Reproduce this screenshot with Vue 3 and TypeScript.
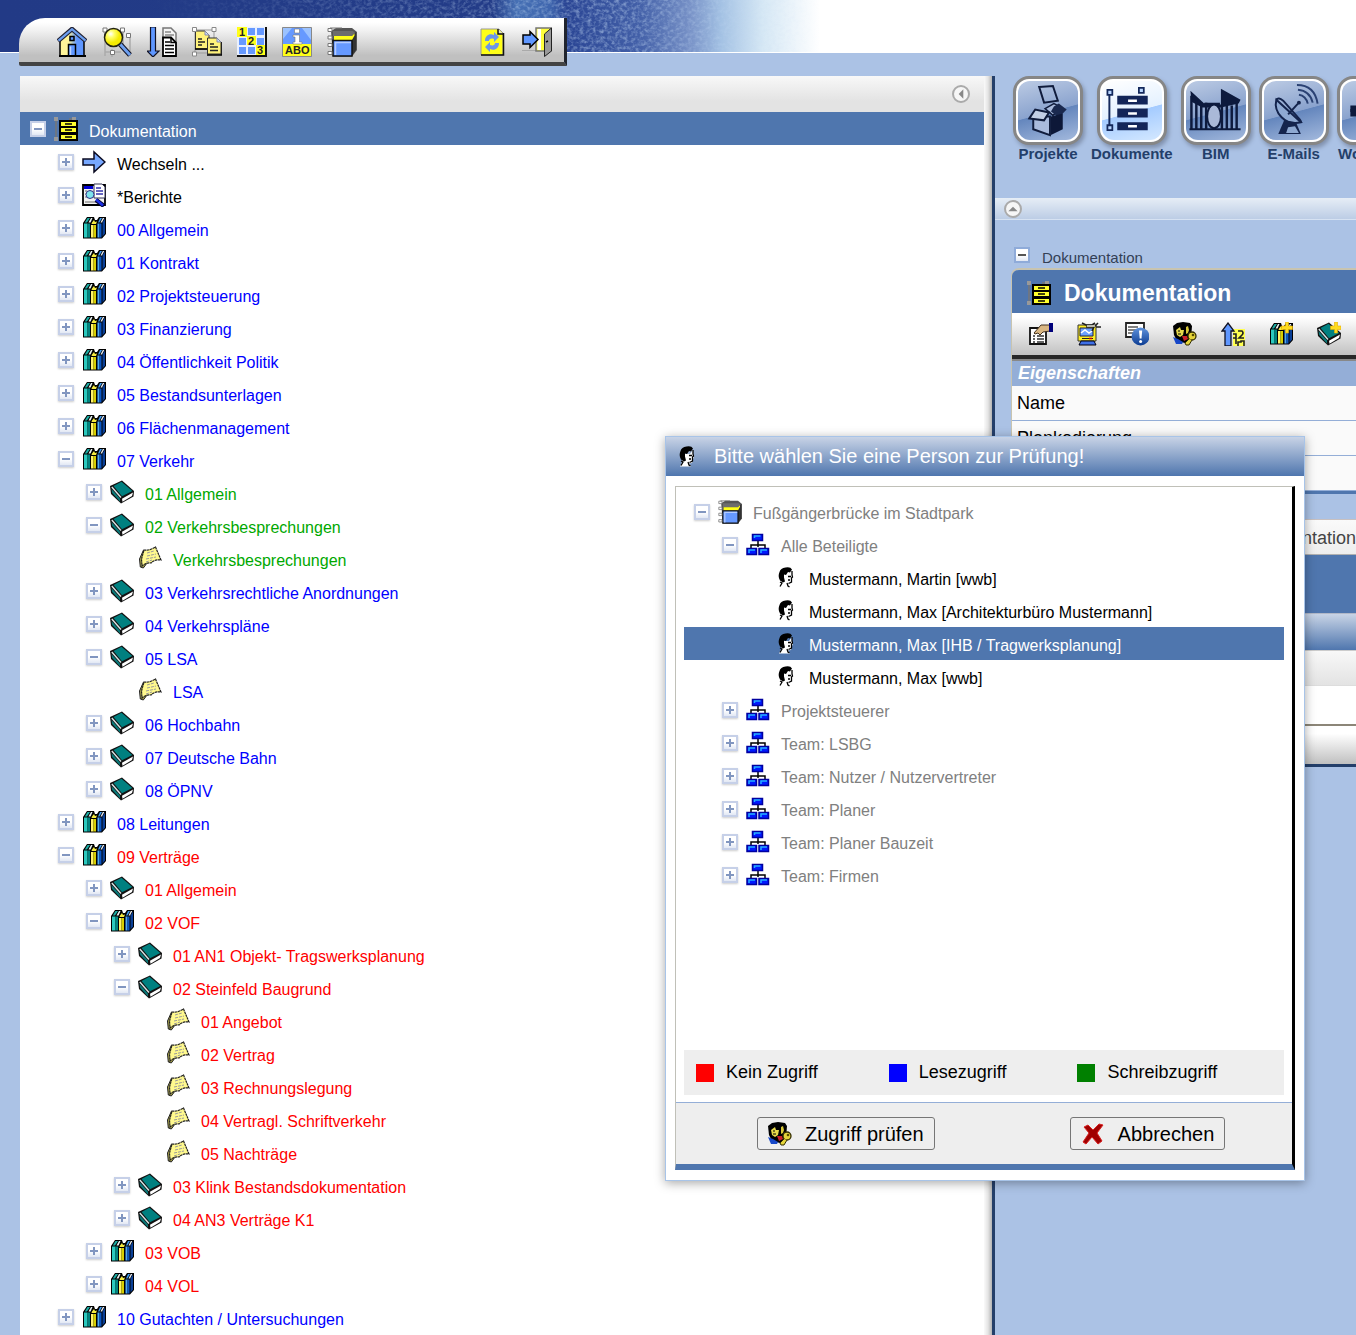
<script setup lang="ts">
import { ref } from 'vue'

type Toggle = 'open' | 'closed' | 'none'
type Access = 'neutral' | 'denied' | 'read' | 'write' | 'group'

interface TreeNode {
  label: string
  level: number
  toggle: Toggle
  icon: string
  access: Access
}

interface Caption {
  x: number
  y: number
  text: string
}

const node = (level: number, toggle: Toggle, icon: string, access: Access, label: string): TreeNode => ({
  label,
  level,
  toggle,
  icon,
  access,
})

const documents: TreeNode[] = [
  node(0, 'open', 'cabinet', 'neutral', 'Dokumentation'),
  node(1, 'closed', 'arrow', 'neutral', 'Wechseln ...'),
  node(1, 'closed', 'report', 'neutral', '*Berichte'),
  node(1, 'closed', 'books', 'read', '00 Allgemein'),
  node(1, 'closed', 'books', 'read', '01 Kontrakt'),
  node(1, 'closed', 'books', 'read', '02 Projektsteuerung'),
  node(1, 'closed', 'books', 'read', '03 Finanzierung'),
  node(1, 'closed', 'books', 'read', '04 Öffentlichkeit Politik'),
  node(1, 'closed', 'books', 'read', '05 Bestandsunterlagen'),
  node(1, 'closed', 'books', 'read', '06 Flächenmanagement'),
  node(1, 'open', 'books', 'read', '07 Verkehr'),
  node(2, 'closed', 'book', 'write', '01 Allgemein'),
  node(2, 'open', 'book', 'write', '02 Verkehrsbesprechungen'),
  node(3, 'none', 'note', 'write', 'Verkehrsbesprechungen'),
  node(2, 'closed', 'book', 'read', '03 Verkehrsrechtliche Anordnungen'),
  node(2, 'closed', 'book', 'read', '04 Verkehrspläne'),
  node(2, 'open', 'book', 'read', '05 LSA'),
  node(3, 'none', 'note', 'read', 'LSA'),
  node(2, 'closed', 'book', 'read', '06 Hochbahn'),
  node(2, 'closed', 'book', 'read', '07 Deutsche Bahn'),
  node(2, 'closed', 'book', 'read', '08 ÖPNV'),
  node(1, 'closed', 'books', 'read', '08 Leitungen'),
  node(1, 'open', 'books', 'denied', '09 Verträge'),
  node(2, 'closed', 'book', 'denied', '01 Allgemein'),
  node(2, 'open', 'books', 'denied', '02 VOF'),
  node(3, 'closed', 'book', 'denied', '01 AN1 Objekt- Tragswerksplanung'),
  node(3, 'open', 'book', 'denied', '02 Steinfeld Baugrund'),
  node(4, 'none', 'note', 'denied', '01 Angebot'),
  node(4, 'none', 'note', 'denied', '02 Vertrag'),
  node(4, 'none', 'note', 'denied', '03 Rechnungslegung'),
  node(4, 'none', 'note', 'denied', '04 Vertragl. Schriftverkehr'),
  node(4, 'none', 'note', 'denied', '05 Nachträge'),
  node(3, 'closed', 'book', 'denied', '03 Klink Bestandsdokumentation'),
  node(3, 'closed', 'book', 'denied', '04 AN3 Verträge K1'),
  node(2, 'closed', 'books', 'denied', '03 VOB'),
  node(2, 'closed', 'books', 'denied', '04 VOL'),
  node(1, 'closed', 'books', 'read', '10 Gutachten / Untersuchungen'),
]

const people: TreeNode[] = [
  node(0, 'open', 'binder', 'group', 'Fußgängerbrücke im Stadtpark'),
  node(1, 'open', 'org', 'group', 'Alle Beteiligte'),
  node(2, 'none', 'person', 'neutral', 'Mustermann, Martin [wwb]'),
  node(2, 'none', 'person', 'neutral', 'Mustermann, Max [Architekturbüro Mustermann]'),
  node(2, 'none', 'person', 'neutral', 'Mustermann, Max [IHB / Tragwerksplanung]'),
  node(2, 'none', 'person', 'neutral', 'Mustermann, Max [wwb]'),
  node(1, 'closed', 'org', 'group', 'Projektsteuerer'),
  node(1, 'closed', 'org', 'group', 'Team: LSBG'),
  node(1, 'closed', 'org', 'group', 'Team: Nutzer / Nutzervertreter'),
  node(1, 'closed', 'org', 'group', 'Team: Planer'),
  node(1, 'closed', 'org', 'group', 'Team: Planer Bauzeit'),
  node(1, 'closed', 'org', 'group', 'Team: Firmen'),
]

const trees = { documents, people }
const selected = ref({ documents: 0, people: 4 })

const mainTools = ['home', 'search', 'sortdocs', 'copy', 'numbers', 'abo', 'binder']
const sessionTools = ['refresh', 'exit']
const cardTools = ['props', 'screen', 'info', 'users', 'order', 'booksnew', 'booknew']

// Lettering that sits on top of an icon
const captions: Record<string, Caption[]> = {
  numbers: [
    { x: 2, y: 9, text: '1' },
    { x: 11, y: 18, text: '2' },
    { x: 20, y: 27, text: '3' },
  ],
  abo: [{ x: 3, y: 27, text: 'ABO' }],
}

const modules = [
  { icon: 'nav-projects', label: 'Projekte', active: false },
  { icon: 'nav-documents', label: 'Dokumente', active: true },
  { icon: 'nav-bim', label: 'BIM', active: false },
  { icon: 'nav-mail', label: 'E-Mails', active: false },
  { icon: 'nav-flow', label: 'Workflow', active: false },
]
const legend = [
  { kind: 'denied', label: 'Kein Zugriff' },
  { kind: 'read', label: 'Lesezugriff' },
  { kind: 'write', label: 'Schreibzugriff' },
]
</script>

<template>
  <svg class="sprite" aria-hidden="true">
    <defs>
      <linearGradient id="g-house"><stop offset=".35" stop-color="#fff59a" /><stop offset=".7" stop-color="#5f97ff" /></linearGradient>
      <radialGradient id="g-lens" cx=".35" cy=".3"><stop offset="0" stop-color="#fff" /><stop offset=".4" stop-color="#ffff6a" /><stop offset="1" stop-color="#f4ea00" /></radialGradient>
      <linearGradient id="g-info" x2="0" y2="1"><stop offset="0" stop-color="#5f93dd" /><stop offset="1" stop-color="#0c3c92" /></linearGradient>
    </defs>
    <symbol id="home" viewBox="0 0 30 30">
      <path d="M3 13 15 3l12 10v16H3z" fill="url(#g-house)" stroke="#000" stroke-width="1.5" />
      <path d="M1 14 15 2l14 12" fill="none" stroke="#223" stroke-width="4.500" />
      <path d="M1.500 13.700 15 2.200l13.500 11.500" fill="none" stroke="#6c9ff0" stroke-width="2.300" />
      <path d="M13 9.500h4v4h-4z" fill="#5f97ff" stroke="#000" stroke-width="1.500" />
      <path d="M11.500 29V17.500h7V29" fill="#5f97ff" stroke="#000" stroke-width="1.500" />
      <path d="M13.500 28V19.500" stroke="#bcd3ff" stroke-width="1.500" />
      <path d="M2 29h27" stroke="#000" stroke-width="2" />
    </symbol>
    <symbol id="search" viewBox="0 0 30 30">
      <path d="M3 3v26M21 3v20M28 9v20M3 25h16M10 22v8" stroke="#aaa" stroke-width="1.500" fill="none" />
      <path d="M1 1h4v4H1zM18.500 1h4v4h-4zM24.500 6.500h4v4h-4zM8.500 23.500h4v4h-4z" fill="#fff" stroke="#777" />
      <path d="m18 17 10 11" stroke="#112" stroke-width="5" /><path d="m18 17 10 11" stroke="#6c9ff0" stroke-width="3" />
      <circle cx="11.500" cy="10.500" r="9" fill="url(#g-lens)" stroke="#221" stroke-width="1.500" />
    </symbol>
    <symbol id="sortdocs" viewBox="0 0 30 30">
      <path d="M3.500 0h5v24H12l-6 6-6-6h3.500z" fill="#5f97ff" stroke="#112" stroke-width="1.200" />
      <path d="M16 1h8l5 5v9H16z" fill="#f4f4f4" stroke="#777" stroke-width="1.500" />
      <path d="M18 5h6M18 8h9" stroke="#888" stroke-width="1.500" />
      <path d="M16 10.500h8l5 5V29H16z" fill="#fff" stroke="#000" stroke-width="1.800" />
      <path d="M24 10v5.500h5M18 15h5M18 18.500h9M18 22h9M18 25.500h9" fill="none" stroke="#000" stroke-width="1.500" />
    </symbol>
    <symbol id="copy" viewBox="0 0 30 30">
      <path d="M3 3h19v23H3z" fill="none" stroke="#999" />
      <path d="M3.500 4H13l4 4v14H3.500z" fill="#fff27a" stroke="#333" />
      <path d="M15.500 11H25l4 4v12H15.500z" fill="#fff27a" stroke="#333" />
      <path d="M3 22h12M15 28h15V15" stroke="#000" stroke-width="1.500" fill="none" />
      <path d="M6 12h4M6 15h7M6 18h4M18 17h4M18 20h8M18 23.500h8" stroke="#222" stroke-width="1.500" />
      <path d="M13 4v4h4M25 11v4h4" fill="#cfe0ff" stroke="#88a" />
      <path d="M.5 .5h4v4h-4zM20 .5h4v4h-4zM.5 25h4v4h-4z" fill="#fff" stroke="#888" />
    </symbol>
    <symbol id="numbers" viewBox="0 0 30 30">
      <path d="M0 0h30v30H0z" fill="#e9f0ff" /><path d="M0 29h29V0" fill="none" stroke="#111" stroke-width="2" />
      <path d="M11 1h7v7h-7zM20 1h7v7h-7zM2 11h7v7H2zM20 11h7v7h-7zM2 20h7v7H2zM11 20h7v7h-7z" fill="#6699ff" />
      <path d="M0 0h10v10H0zM10 9h9v9h-9zM19 18h9v10h-9z" fill="#ffff19" />
    </symbol>
    <symbol id="abo" viewBox="0 0 30 30">
      <path d="M.5 .5h29v29H.5z" fill="#6699ff" stroke="#888" />
      <path d="M1 1h9L1 12zM20 1h9v12z" fill="#9bc2ff" />
      <path d="M1 17h28v12H1z" fill="#ffff19" />
      <path d="M12.500 2h5v4h-5zM11 8h6.500v7H20v2h-9v-2h2v-5h-2z" fill="#fff" stroke="#777" stroke-width=".6" />
    </symbol>
    <symbol id="binder" viewBox="0 0 30 30">
      <path d="M4 4 9 1h16l5 4v18l-5 6.500H6z" fill="#555" />
      <path d="M25 9l4-4v18l-4 6z" fill="#333" />
      <path d="M6 4h20l2 2-3 3H6z" fill="#6d6d6d" />
      <path d="M7 9h18l2.500-2.500v2L25 13H7z" fill="#ffff19" />
      <path d="M6 13.500h19V29H6z" fill="#6699ff" stroke="#111" stroke-width="1.500" />
      <path d="M8.500 28V15.500H24" stroke="#b4ccff" stroke-width="1.500" fill="none" />
      <path d="M1 1.500h4v3H1zM1 9h4v3H1zM1 16.500h4v3H1zM1 24.500h4v3H1z" fill="#fff" stroke="#777" />
      <path d="M3 1h12" stroke="#777" />
    </symbol>
    <symbol id="refresh" viewBox="0 0 30 30">
      <path d="M4 2h18l4 4v22H4z" fill="#ffff19" stroke="#999" />
      <path d="M4 28h22.500V6" fill="none" stroke="#111" stroke-width="1.500" /><path d="M21 2v5h5" fill="#ddd" stroke="#111" stroke-width="1.500" />
      <path d="M8 14c0-6 5-8 9-6V5l5 5-5 5v-3c-3-1-5 0-5 2zM22 16c0 6-5 8-9 6v3l-5-5 5-5v3c3 1 5 0 5-2z" fill="#6c96e8" />
    </symbol>
    <symbol id="exit" viewBox="0 0 30 30">
      <path d="M0 23.500h14" stroke="#aaa" />
      <path d="M14 1h15v23H14z" fill="#ffff3c" stroke="#777" stroke-width="1.500" /><path d="M15.500 2H19v21h-3.500z" fill="#fff" />
      <path d="M22.500 7 29.500 1v23l-7 5.500z" fill="#999" stroke="#222" /><path d="M24 15l2-1" stroke="#000" stroke-width="1.500" />
      <path d="M1 8h7V4.500l8 8-8 8V17H1z" fill="#5f97ff" stroke="#000" stroke-width="1.500" />
    </symbol>

    <symbol id="cabinet" viewBox="0 0 24 24">
      <path d="M2 2v20M15 2h7" stroke="#777" stroke-width="1.500" /><path d="M0 0h4v4H0zM0 20h4v4H0zM18 0h4v3h-4z" fill="#999" />
      <path d="M5 3h19v21H5z" fill="#000" />
      <path d="M7 5h15v4H7zM7 11h15v4H7zM7 18h15v4H7z" fill="#ffff2e" />
      <path d="M11 7h7M11 13h7M11 20h7" stroke="#000" stroke-width="1.500" />
    </symbol>
    <symbol id="arrow" viewBox="0 0 24 24"><path d="M1 9h11V2l11 10-11 10v-7H1z" fill="#77a8ff" stroke="#0a0a20" stroke-width="1.500" /></symbol>
    <symbol id="report" viewBox="0 0 24 24">
      <path d="M1 2h22v20H1z" fill="#f2f2f2" stroke="#000" stroke-width="1.800" /><path d="M2 3h9v3H2z" fill="#0000d8" />
      <path d="M3 8h2M3 11h2M3 14h2M3 19h11" stroke="#999" stroke-width="1.500" />
      <path d="M12 1h8l3 3v11H12z" fill="#fff" stroke="#335" /><path d="M14 5h5M14 8h7M14 11h7" stroke="#33a" stroke-width="1.500" />
      <circle cx="8" cy="11.500" r="4" fill="#7ee4ec" stroke="#338" /><path d="m14 17 8 6" stroke="#000030" stroke-width="4.500" /><path d="m14 16.500 7 6" stroke="#1b30e8" stroke-width="2.500" />
    </symbol>
    <symbol id="books" viewBox="0 0 24 24">
      <path d="M1 7 5 1h7l1 3h2l2-3h7v17l-4 4.500H1z" fill="#000" />
      <path d="M2 7.500h3.500v14H2z" fill="#2cc9be" /><path d="M5.500 7.500h2.500v14H5.500z" fill="#008580" />
      <path d="M5.500 2H8L5 6.500H2.800z" fill="#1cada5" /><path d="M9 2h1.500L8.500 6.500H6.500z" fill="#e8f4f2" />
      <path d="M9 9h2.500v12.500H9z" fill="#fff36b" /><path d="M11.500 9H14v12.500h-2.500z" fill="#d8cf00" /><path d="M10 6.500 12 4l1 2 2-.5-1 2.500H9.500z" fill="#f4ea40" />
      <path d="M15.500 7.500h2v14h-2z" fill="#4ba6f6" /><path d="M17.500 7.500h2v14h-2z" fill="#0b56c4" /><path d="m20.500 6.500 2.500-4v15l-2.500 3z" fill="#0a3f96" />
      <path d="M18 2h2l-2.500 4.500H16z" fill="#3f9cf2" /><path d="M20.800 2h1.500L20 6.500h-1.500z" fill="#e8eef8" />
    </symbol>
    <symbol id="book" viewBox="0 0 24 24">
      <path d="M12 0.500 24 11l-.5 5.500L11 23.500 1 14 0 6z" fill="#111" />
      <path d="M11.500 1.800 22.300 11 12 16.300 3.500 6z" fill="#008080" /><path d="M1.500 9 10 18.500v3L2.200 13z" fill="#0a7a7a" /><path d="M1.800 7 11 17.500" stroke="#d8e6e6" stroke-width="1.400" />
      <path d="m12 18.700 11-6.200-1 3.500-9.500 5.700z" fill="#fff" />
    </symbol>
    <symbol id="note" viewBox="0 0 24 24">
      <path d="M5.500 4 1.500 13l.8 8 3 1 3-4z" fill="#a5a04a" stroke="#222" />
      <path d="M6 4q5 1 11.500-3L23 14q-6-1-10 3-4-1-9 3l-.5-7z" fill="#fff98e" stroke="#222" stroke-width="1.200" stroke-dasharray="2.500 .5" />
      <path d="m9 7 7-2M9 10l9-2M8 13l10-2M8 16l6-2" stroke="#999" stroke-dasharray="3 1" />
    </symbol>
    <symbol id="org" viewBox="0 0 24 24">
      <path d="M12 7v7M5 15v-3h14v3" fill="none" stroke="#000" stroke-width="1.500" />
      <path d="M6.500 1.500h10v6h-10zM1 15.500h9.500v6H1zM13 15.500h9.500v6H13z" fill="#0019ff" stroke="#0000a0" stroke-width="1.500" />
      <path d="M8.500 5V3h6M3 20v-3h6M15 20v-3h6" stroke="#26b0ff" stroke-width="1.500" fill="none" />
    </symbol>
    <symbol id="person" viewBox="0 0 24 24">
      <path d="M9 9h6l3-4v6l1 1-1 2-1 4-3 .5 2 3H5l2-4z" fill="#fff" />
      <path d="M5.500 6q1-4 6-4.500 5-1 6.500 2l-2 3-2-.5-2 3-2-.5v3l1 4-2 1-3-2q-2.500-4-.5-8.500z" fill="#000" />
      <path d="M18 5v4l.5 2-1 1v4l-3 1.500M6 16l2 1-2 3.500M13 17l1 3 1.500 1M14 10.500h3M14 14h2" stroke="#000" stroke-width="1.300" fill="none" />
    </symbol>
    <symbol id="props" viewBox="0 0 24 24">
      <path d="M1 6h16v16H1z" fill="#fff" stroke="#111" stroke-width="1.800" /><path d="M4 14h2M8 14h7M4 17h2M8 17h7M4 20h2M8 20h7" stroke="#333" stroke-width="1.300" />
      <path d="M5 11 12 3h9v6l-7 1-3 3-2-2-3 1z" fill="#d9b682" stroke="#432" /><path d="M20 1h4v9h-4z" fill="#00007a" />
    </symbol>
    <symbol id="screen" viewBox="0 0 24 24">
      <path d="M1 3h18v16H1z" fill="#ffee20" stroke="#333" /><path d="M3 6h13v8H3z" fill="#6aa0ff" stroke="#224" /><path d="M4 11l4-3 4 3 3-2" stroke="#fff" fill="none" stroke-width="1.500" />
      <path d="M5 1l4 2h6l3-2M9 5h8l4-4M17 5l-2 4M19 5h5" fill="none" stroke="#222" stroke-width="1.600" /><path d="M10 4h8" stroke="#ddd" stroke-width="1.500" />
      <path d="M4 19h13l2 4H2z" fill="#3f70e8" stroke="#001" /><path d="M5 16.500h11" stroke="#222" /><path d="M12 16.500h3" stroke="#c00" stroke-width="1.500" />
    </symbol>
    <symbol id="info" viewBox="0 0 24 24">
      <path d="M1 1h18v14H1z" fill="#fff" stroke="#222" stroke-width="1.800" /><path d="M3 5h10M3 8h8M3 11h7" stroke="#555" stroke-width="1.300" />
      <circle cx="15.500" cy="14.500" r="9" fill="url(#g-info)" /><path d="M14 8.500h3.200l-.7 8h-1.800z" fill="#fff" /><circle cx="15.600" cy="19.500" r="1.500" fill="#fff" />
    </symbol>
    <symbol id="users" viewBox="0 0 24 24">
      <path d="M0 4 4 1l6-1 7 1 2 3-1 12-6 5-8-2-3-6z" fill="#000" />
      <path d="M3 8l4-3 1 3h3l-1 5-3 2-3-2z" fill="#e6d94a" /><path d="M13 5l2-1 1 4-1 3-2 1z" fill="#d8c838" /><path d="M6 8v2M8 12H5" stroke="#000" />
      <path d="M0 15l5 2 5 3-1 2H3z" fill="#1747c8" /><path d="M9 14l5 0 1 3-4 2z" fill="#c8202a" />
      <circle cx="19" cy="14" r="4" fill="#e4d43a" stroke="#332d00" stroke-width="1.300" /><circle cx="20" cy="13" r="1.300" fill="#554b00" />
      <path d="m16 17-4 4 1 2h3l3-5" fill="#e4d43a" stroke="#332d00" />
    </symbol>
    <symbol id="order" viewBox="0 0 24 24">
      <path d="M12 7h12v17H12z" fill="#ffff50" />
      <path d="M4 24V9H1l6-8 6 8h-3v15z" fill="#5f97ff" stroke="#112" stroke-width="1.300" />
      <path d="M12 12h3v10M12 16h3M17 9h4q2 2 0 4l-3 3h5M17 24v-4h3v-1h3v5" fill="none" stroke="#222" stroke-width="1.600" />
    </symbol>
    <symbol id="booksnew" viewBox="0 0 24 24"><use href="#books" /><path d="M16.500 0h3v4h4v3.500h-4V11h-3V7.500h-4V4h4z" fill="#ffdc1e" stroke="#e8ad00" stroke-width=".6" /></symbol>
    <symbol id="booknew" viewBox="0 0 24 24"><use href="#book" /><path d="M17.500 0h3v4h3.500v3.500h-3.500V11h-3V7.500h-4V4h4z" fill="#ffdc1e" stroke="#e8ad00" stroke-width=".6" /></symbol>
    <symbol id="cancel" viewBox="0 0 24 24">
      <path d="M3 5 7 3l5 5 6-6 4 1-6 8 5 8-4 3-6-7-6 7-3-2 6-9z" fill="#a00000" stroke="#d82020" />
    </symbol>

    <symbol id="nav-projects" viewBox="0 0 60 60">
      <path d="m21 6 14-1 5 15-14 2z" fill="none" stroke="#101c3c" stroke-width="2" />
      <path d="M27 28l9-5 8 4-9 8z" fill="#a9bbdd" stroke="#101c3c" stroke-width="1.500" /><path d="m36 26 5-3 8 6-8 8-8-6z" fill="#1a294f" />
      <path d="M33 36 45 33v16l-12 6z" fill="#0d1838" /><path d="M15 36h17v19l-17-6z" fill="#a9bbdd" stroke="#101c3c" stroke-width="2" /><path d="m11 38 6-9 14 3-5 8z" fill="#c2cfe6" stroke="#101c3c" stroke-width="2" />
    </symbol>
    <symbol id="nav-documents" viewBox="0 0 60 60">
      <path d="M7 12v34" stroke="#14295c" stroke-width="2" /><path d="M5 9h5v5H5zM5 45h5v5H5zM37 7h5v5h-5z" fill="#b9d6ff" stroke="#14295c" stroke-width="1.800" />
      <path d="M15 15h31v9H15zM15 28h31v9H15zM15 42h31v8H15z" fill="#132558" /><path d="M26 20h9M26 33h9M26 46h9" stroke="#fff" stroke-width="2.500" />
    </symbol>
    <symbol id="nav-bim" viewBox="0 0 60 60">
      <path d="m4 10 14 13v-1h16v2h1V8l20 11-2 4-18 4H16L5 21z" fill="#0d1a3d" />
      <path d="M5 15v34M10 20v29M15 22v27M20 22v27M36 26v23M41 25v24M46 25v24M51 22v27" stroke="#0d1a3d" stroke-width="2.500" /><ellipse cx="28" cy="36" rx="7" ry="12" fill="#aab9d8" stroke="#0d1a3d" stroke-width="2" /><path d="M3 49h52" stroke="#0d1a3d" stroke-width="2" />
    </symbol>
    <symbol id="nav-mail" viewBox="0 0 60 60">
      <path d="M12 19c-3 13 9 27 25 23z" fill="#8ea9d2" stroke="#14244d" stroke-width="2" /><path d="M12 19q2-3 7 1l15 17q4 4 3 5" fill="none" stroke="#14244d" stroke-width="2" />
      <path d="m24 34 10-11" stroke="#14244d" stroke-width="2" /><circle cx="35" cy="22" r="2" fill="#14244d" /><path d="M20 40 14 54h23l-5-12z" fill="#14244d" /><path d="m24 47 7-1 4 7H22z" fill="#8ea9d2" />
      <path d="M35 14q7 1 9 9M34 9q12 1 15 13M33 4q18 0 21 19" fill="none" stroke="#2b4273" stroke-width="2" />
    </symbol>
    <symbol id="nav-flow" viewBox="0 0 60 60"><path d="M8 25h20v11H8zM32 18h20v12H32z" fill="#0d1a3d" /><path d="M8 30h44" stroke="#0d1a3d" stroke-width="3" /></symbol>
  </svg>

  <div class="page">
    <header class="banner">
      <svg class="texture" width="820" height="52" aria-hidden="true">
        <defs>
          <linearGradient id="sky"><stop offset="0" stop-color="#223a86" /><stop offset=".6" stop-color="#233c88" /><stop offset=".63" stop-color="#4670b4" /><stop offset=".67" stop-color="#3f66ae" /><stop offset=".69" stop-color="#2a4594" /><stop offset=".78" stop-color="#4360a8" /><stop offset=".84" stop-color="#7690c6" /><stop offset=".88" stop-color="#a4c2e4" /><stop offset=".93" stop-color="#d6e8f5" /><stop offset="1" stop-color="#fff" /></linearGradient>
          <linearGradient id="fade"><stop offset=".18" stop-color="#000" /><stop offset=".4" stop-color="#444" /><stop offset=".75" stop-color="#999" /><stop offset="1" stop-color="#000" /></linearGradient>
          <mask id="fademask"><rect width="820" height="52" fill="url(#fade)" /></mask>
          <filter id="weave" x="0" y="0" width="1" height="1"><feTurbulence type="fractalNoise" baseFrequency=".25 .3" numOctaves="3" seed="4" /><feColorMatrix values="0 0 0 0 .55  0 0 0 0 .7  0 0 0 0 .9  2 0 0 0 -.8" /></filter>
        </defs>
        <rect width="820" height="52" fill="url(#sky)" />
        <rect width="820" height="52" filter="url(#weave)" mask="url(#fademask)" />
      </svg>
      <nav class="toolbar" aria-label="Werkzeuge">
        <button v-for="t in mainTools" :key="t" type="button" class="tool" :aria-label="t">
          <svg>
            <use :href="'#' + t" />
            <text v-for="c in captions[t] ?? []" :key="c.text" :x="c.x" :y="c.y" class="caption">{{ c.text }}</text>
          </svg>
        </button>
        <span class="spacer"></span>
        <button v-for="t in sessionTools" :key="t" type="button" class="tool" :aria-label="t"><svg><use :href="'#' + t" /></svg></button>
      </nav>
    </header>

    <main class="workspace">
      <section class="left">
        <div class="left-body">
          <div class="left-head">
            <button type="button" class="round" aria-label="Einklappen"><svg viewBox="0 0 18 18"><path d="M12 3v12L6 9z" fill="#888" /></svg></button>
          </div>
          <ul class="tree">
            <li v-for="(n, i) in trees.documents" :key="i" class="row" :class="[n.access, 'level-' + n.level, { selected: selected.documents === i }]">
              <button v-if="n.toggle !== 'none'" type="button" class="toggle" :class="n.toggle" aria-label="Umschalten"></button>
              <span v-else class="no-toggle"></span>
              <svg class="icon"><use :href="'#' + n.icon" /></svg>
              <a href="#" @click.prevent="selected.documents = i">{{ n.label }}</a>
            </li>
          </ul>
        </div>
        <div class="edge"></div>
      </section>

      <section class="right">
        <nav class="modules" aria-label="Module">
          <a v-for="m in modules" :key="m.label" href="#" class="module" :class="{ active: m.active }" @click.prevent>
            <span class="tile"><svg><use :href="'#' + m.icon" /></svg></span>
            {{ m.label }}
          </a>
        </nav>
        <div class="strip">
          <button type="button" class="round" aria-label="Einklappen"><svg viewBox="0 0 18 18"><path d="M3 12h12L9 6z" fill="#888" /></svg></button>
        </div>
        <div class="crumb">
          <button type="button" class="toggle open" aria-label="Umschalten"></button>
          <span>Dokumentation</span>
        </div>
        <article class="card">
          <h1><svg class="icon"><use href="#cabinet" /></svg>Dokumentation</h1>
          <div class="card-tools">
            <button v-for="t in cardTools" :key="t" type="button" class="tool" :aria-label="t"><svg><use :href="'#' + t" /></svg></button>
          </div>
          <h2>Eigenschaften</h2>
          <table class="props">
            <tbody>
              <tr><th scope="row">Name</th></tr>
              <tr><th scope="row">Plankodierung</th></tr>
              <tr><th scope="row"></th></tr>
            </tbody>
          </table>
        </article>
        <article class="panel">
          <div class="panel-tab">Dokumentation</div>
          <div class="panel-title"></div>
          <div class="panel-bar"></div>
          <div class="panel-head"></div>
          <div class="panel-row"></div>
          <div class="panel-foot"></div>
        </article>
      </section>
    </main>

    <section class="dialog" role="dialog" aria-labelledby="dialog-title">
      <h2 id="dialog-title" class="dialog-title"><svg class="icon"><use href="#person" /></svg>Bitte wählen Sie eine Person zur Prüfung!</h2>
      <div class="dialog-body">
        <ul class="tree">
          <li v-for="(n, i) in trees.people" :key="i" class="row" :class="[n.access, 'level-' + n.level, { selected: selected.people === i }]">
            <button v-if="n.toggle !== 'none'" type="button" class="toggle" :class="n.toggle" aria-label="Umschalten"></button>
            <span v-else class="no-toggle"></span>
            <svg class="icon"><use :href="'#' + n.icon" /></svg>
            <a href="#" @click.prevent="selected.people = i">{{ n.label }}</a>
          </li>
        </ul>
        <ul class="legend">
          <li v-for="l in legend" :key="l.kind"><span class="swatch" :class="l.kind"></span>{{ l.label }}</li>
        </ul>
        <footer class="actions">
          <button type="button" class="action"><svg class="icon"><use href="#users" /></svg>Zugriff prüfen</button>
          <button type="button" class="action"><svg class="icon"><use href="#cancel" /></svg>Abbrechen</button>
        </footer>
      </div>
    </section>
  </div>
</template>

<style>
body {
  margin: 0;
  background: #abc2e5;
}
</style>

<style scoped>
.page {
  position: relative;
  display: flex;
  flex-direction: column;
  min-height: 100vh;
  overflow: hidden;
  font-family: 'Liberation Sans', Arial, sans-serif;
  font-size: 16px;
  color: #000;
}
.sprite {
  position: absolute;
  width: 0;
  height: 0;
}
ul {
  margin: 0;
  padding: 0;
  list-style: none;
}
h1,
h2 {
  margin: 0;
}
button {
  padding: 0;
  border: 0;
  background: none;
  font: inherit;
  color: inherit;
}
a {
  color: inherit;
  text-decoration: none;
}
svg {
  display: block;
}

.banner {
  position: relative;
  height: 76px;
  background: linear-gradient(#fff 53px, #abc2e5 53px);
}
.texture {
  max-width: 100%;
}
.toolbar {
  position: absolute;
  top: 18px;
  left: 19px;
  display: flex;
  align-items: center;
  gap: 15px;
  box-sizing: border-box;
  width: 548px;
  height: 48px;
  padding: 4px 12px 0 38px;
  border-right: 3px solid #20242e;
  border-bottom: 4px solid #444;
  border-radius: 26px 0 0 2px;
  background: linear-gradient(#fff 10%, #f0f0f0 30%, #c0c0c0 85%);
}
.spacer {
  flex: 1;
}
.tool svg {
  width: 30px;
  height: 30px;
}
.caption {
  font-size: 11px;
  font-weight: 700;
  fill: #222;
}

.workspace {
  flex: 1;
  display: grid;
  grid-template-columns: minmax(0, 975fr) minmax(0, 361fr);
  padding-left: 20px;
}
.left {
  display: flex;
  border-right: 3px solid #243f6a;
}
.left-body {
  flex: 1;
  min-width: 0;
  background: #fff;
}
.edge {
  width: 8px;
  background: linear-gradient(90deg, #fafafa, #e4e4e4 50%, #b4b4b4);
}
.left-head {
  display: flex;
  align-items: center;
  justify-content: flex-end;
  height: 36px;
  padding-right: 14px;
  background: linear-gradient(#f8f8f8, #e3e3e3 70%);
}
.round {
  width: 18px;
  height: 18px;
  box-sizing: border-box;
  border: 2px solid #aaa;
  border-radius: 50%;
  background: #f6f6f6;
}
.round svg {
  width: 14px;
  height: 14px;
}

.row {
  display: flex;
  align-items: center;
  height: 33px;
  padding-left: 10px;
  white-space: nowrap;
}
.level-1 {
  padding-left: 38px;
}
.level-2 {
  padding-left: 66px;
}
.level-3 {
  padding-left: 94px;
}
.level-4 {
  padding-left: 122px;
}
.row .icon {
  margin: 0 11px 0 8px;
}
.row a {
  padding-top: 5px;
}
.left .row a {
  padding-top: 7px;
}
.icon {
  flex: none;
  width: 24px;
  height: 24px;
}
.no-toggle {
  width: 16px;
}
.toggle {
  position: relative;
  flex: none;
  width: 16px;
  height: 16px;
  box-sizing: border-box;
  border: 2px solid #c6d0e8;
  background: linear-gradient(#fff 50%, #e2e8f4);
  box-shadow: 0 1px 2px #ccc;
}
.toggle::before,
.toggle.closed::after {
  content: '';
  position: absolute;
  top: 5px;
  left: 2px;
  width: 8px;
  height: 2px;
  background: #8196c0;
}
.toggle.closed::after {
  transform: rotate(90deg);
}
.read {
  color: #00f;
}
.write {
  color: #00a800;
}
.denied {
  color: #f00;
}
.group {
  color: #808080;
}
.row.selected {
  background: #4f76ae;
  color: #fff;
}
.row.selected .toggle {
  box-shadow: none;
}

.right {
  min-width: 0;
  overflow: hidden;
}
.modules {
  display: flex;
  gap: 8px;
  height: 122px;
  padding-left: 18px;
}
.module {
  display: flex;
  flex: none;
  flex-direction: column;
  align-items: center;
  font-size: 15px;
  line-height: 17px;
  font-weight: 700;
  color: #243f6a;
}
.tile {
  box-sizing: border-box;
  width: 70px;
  height: 69px;
  padding: 2px;
  border: 3px solid #868686;
  border-radius: 16px;
  background: #fff;
  box-shadow: 2px 3px 4px #8090ac;
}
.tile svg {
  width: 60px;
  height: 59px;
  border-radius: 12px;
  background: linear-gradient(165deg, #bccbe4, #8aa3ce 52%, #6486bd 53%, #a3b9dd);
}
.active .tile svg {
  background: linear-gradient(165deg, #fff, #e4f1ff 52%, #a4cbff 53%, #d4e8ff);
}
.strip {
  display: flex;
  align-items: center;
  height: 21px;
  padding-left: 9px;
  border-bottom: 1px solid #d6e2f2;
  background: linear-gradient(#e6edf6, #bccde5);
}
.crumb {
  display: flex;
  align-items: flex-end;
  gap: 12px;
  box-sizing: border-box;
  height: 48px;
  padding: 0 0 1px 19px;
  font-size: 15px;
  line-height: 18px;
  color: #333f55;
}
.crumb .toggle {
  margin-bottom: 4px;
  border-color: #8fabd9;
  box-shadow: none;
}
.crumb .toggle::before {
  background: #555;
}
.card {
  margin-left: 16px;
  border-top: 2px solid #c8c4b0;
  border-left: 1px solid #c8c4b0;
  border-bottom: 3px solid #4f76ae;
  border-radius: 8px 0 0 0;
  overflow: hidden;
}
.card h1 {
  display: flex;
  align-items: center;
  gap: 13px;
  box-sizing: border-box;
  height: 43px;
  padding: 3px 0 0 15px;
  background: #4f76ae;
  color: #fff;
  font-size: 23px;
  line-height: 28px;
}
.card-tools {
  display: flex;
  align-items: center;
  gap: 24px;
  height: 42px;
  padding-left: 17px;
  border-bottom: 4px solid #282828;
  background: linear-gradient(#fff 10%, #c2c2c2);
}
.card-tools .tool svg {
  width: 24px;
  height: 24px;
}
.card h2 {
  height: 25px;
  padding-left: 6px;
  border-top: 2px solid #888;
  background: #94aed7;
  color: #fff;
  font-size: 18px;
  line-height: 24px;
  font-style: italic;
}
.props {
  width: 100%;
  border-spacing: 0;
  background: #fafafa;
}
.props th {
  height: 34px;
  padding: 0 5px;
  border-bottom: 1px solid #94aed7;
  font-size: 18px;
  line-height: 20px;
  font-weight: 400;
  text-align: left;
}
.panel {
  margin: 25px 0 0 16px;
  border-bottom: 3px solid #243f6a;
}
.panel-tab {
  height: 34px;
  border-top: 1px solid #c8c0c0;
  border-bottom: 1px solid #b0b0b0;
  background: linear-gradient(#fafafa, #eee);
  color: #444;
  font-size: 18px;
  line-height: 36px;
  text-align: right;
}
.panel-title {
  height: 58px;
  background: #4f76ae;
}
.panel-bar {
  height: 36px;
  border-top: 1px solid #b0b8c8;
  background: linear-gradient(#c8d4e6, #4f76ae);
}
.panel-head {
  height: 34px;
  border-top: 1px solid #ccc;
  border-bottom: 1px solid #ddd;
  background: linear-gradient(#f8f8f8, #e3e3e3);
}
.panel-row {
  height: 38px;
  border-bottom: 2px solid #8c8678;
  background: #fff;
}
.panel-foot {
  height: 38px;
  background: linear-gradient(#fff 20%, #c0c0c0);
}

.dialog {
  position: absolute;
  top: 436px;
  left: 665px;
  box-sizing: border-box;
  width: 640px;
  border: 1px solid #a8c4e8;
  background: #fff;
  box-shadow: 0 2px 10px rgba(0, 0, 0, 0.35);
}
.dialog-title {
  display: flex;
  align-items: center;
  gap: 15px;
  height: 39px;
  padding-left: 9px;
  background: linear-gradient(#c8d3e6, #4f76ae);
  color: #fff;
  font-size: 20px;
  font-weight: 400;
}
.dialog-body {
  margin: 10px 9px;
  border: solid #c0c0b8;
  border-width: 1px 3px 6px 1px;
  border-right-color: #000;
  border-bottom-color: #4f76ae;
}
.dialog .tree {
  min-height: 555px;
  padding: 8px 8px 0;
}
.legend {
  display: flex;
  align-items: center;
  gap: 71px;
  height: 45px;
  margin: 0 8px 7px;
  padding-left: 12px;
  background: #eee;
  font-size: 18px;
}
.legend li {
  display: flex;
  align-items: center;
  gap: 12px;
}
.swatch {
  width: 18px;
  height: 18px;
}
.swatch.denied {
  background: #f00;
}
.swatch.read {
  background: #00f;
}
.swatch.write {
  background: #008000;
}
.actions {
  display: flex;
  gap: 135px;
  padding: 14px 0 14px 81px;
  border-top: 1px solid #94aed7;
  background: #eee;
}
.action {
  display: flex;
  align-items: center;
  gap: 13px;
  height: 33px;
  padding: 0 10px;
  border: 1px solid #767676;
  border-radius: 3px;
  font-size: 20px;
  line-height: 28px;
}
</style>
